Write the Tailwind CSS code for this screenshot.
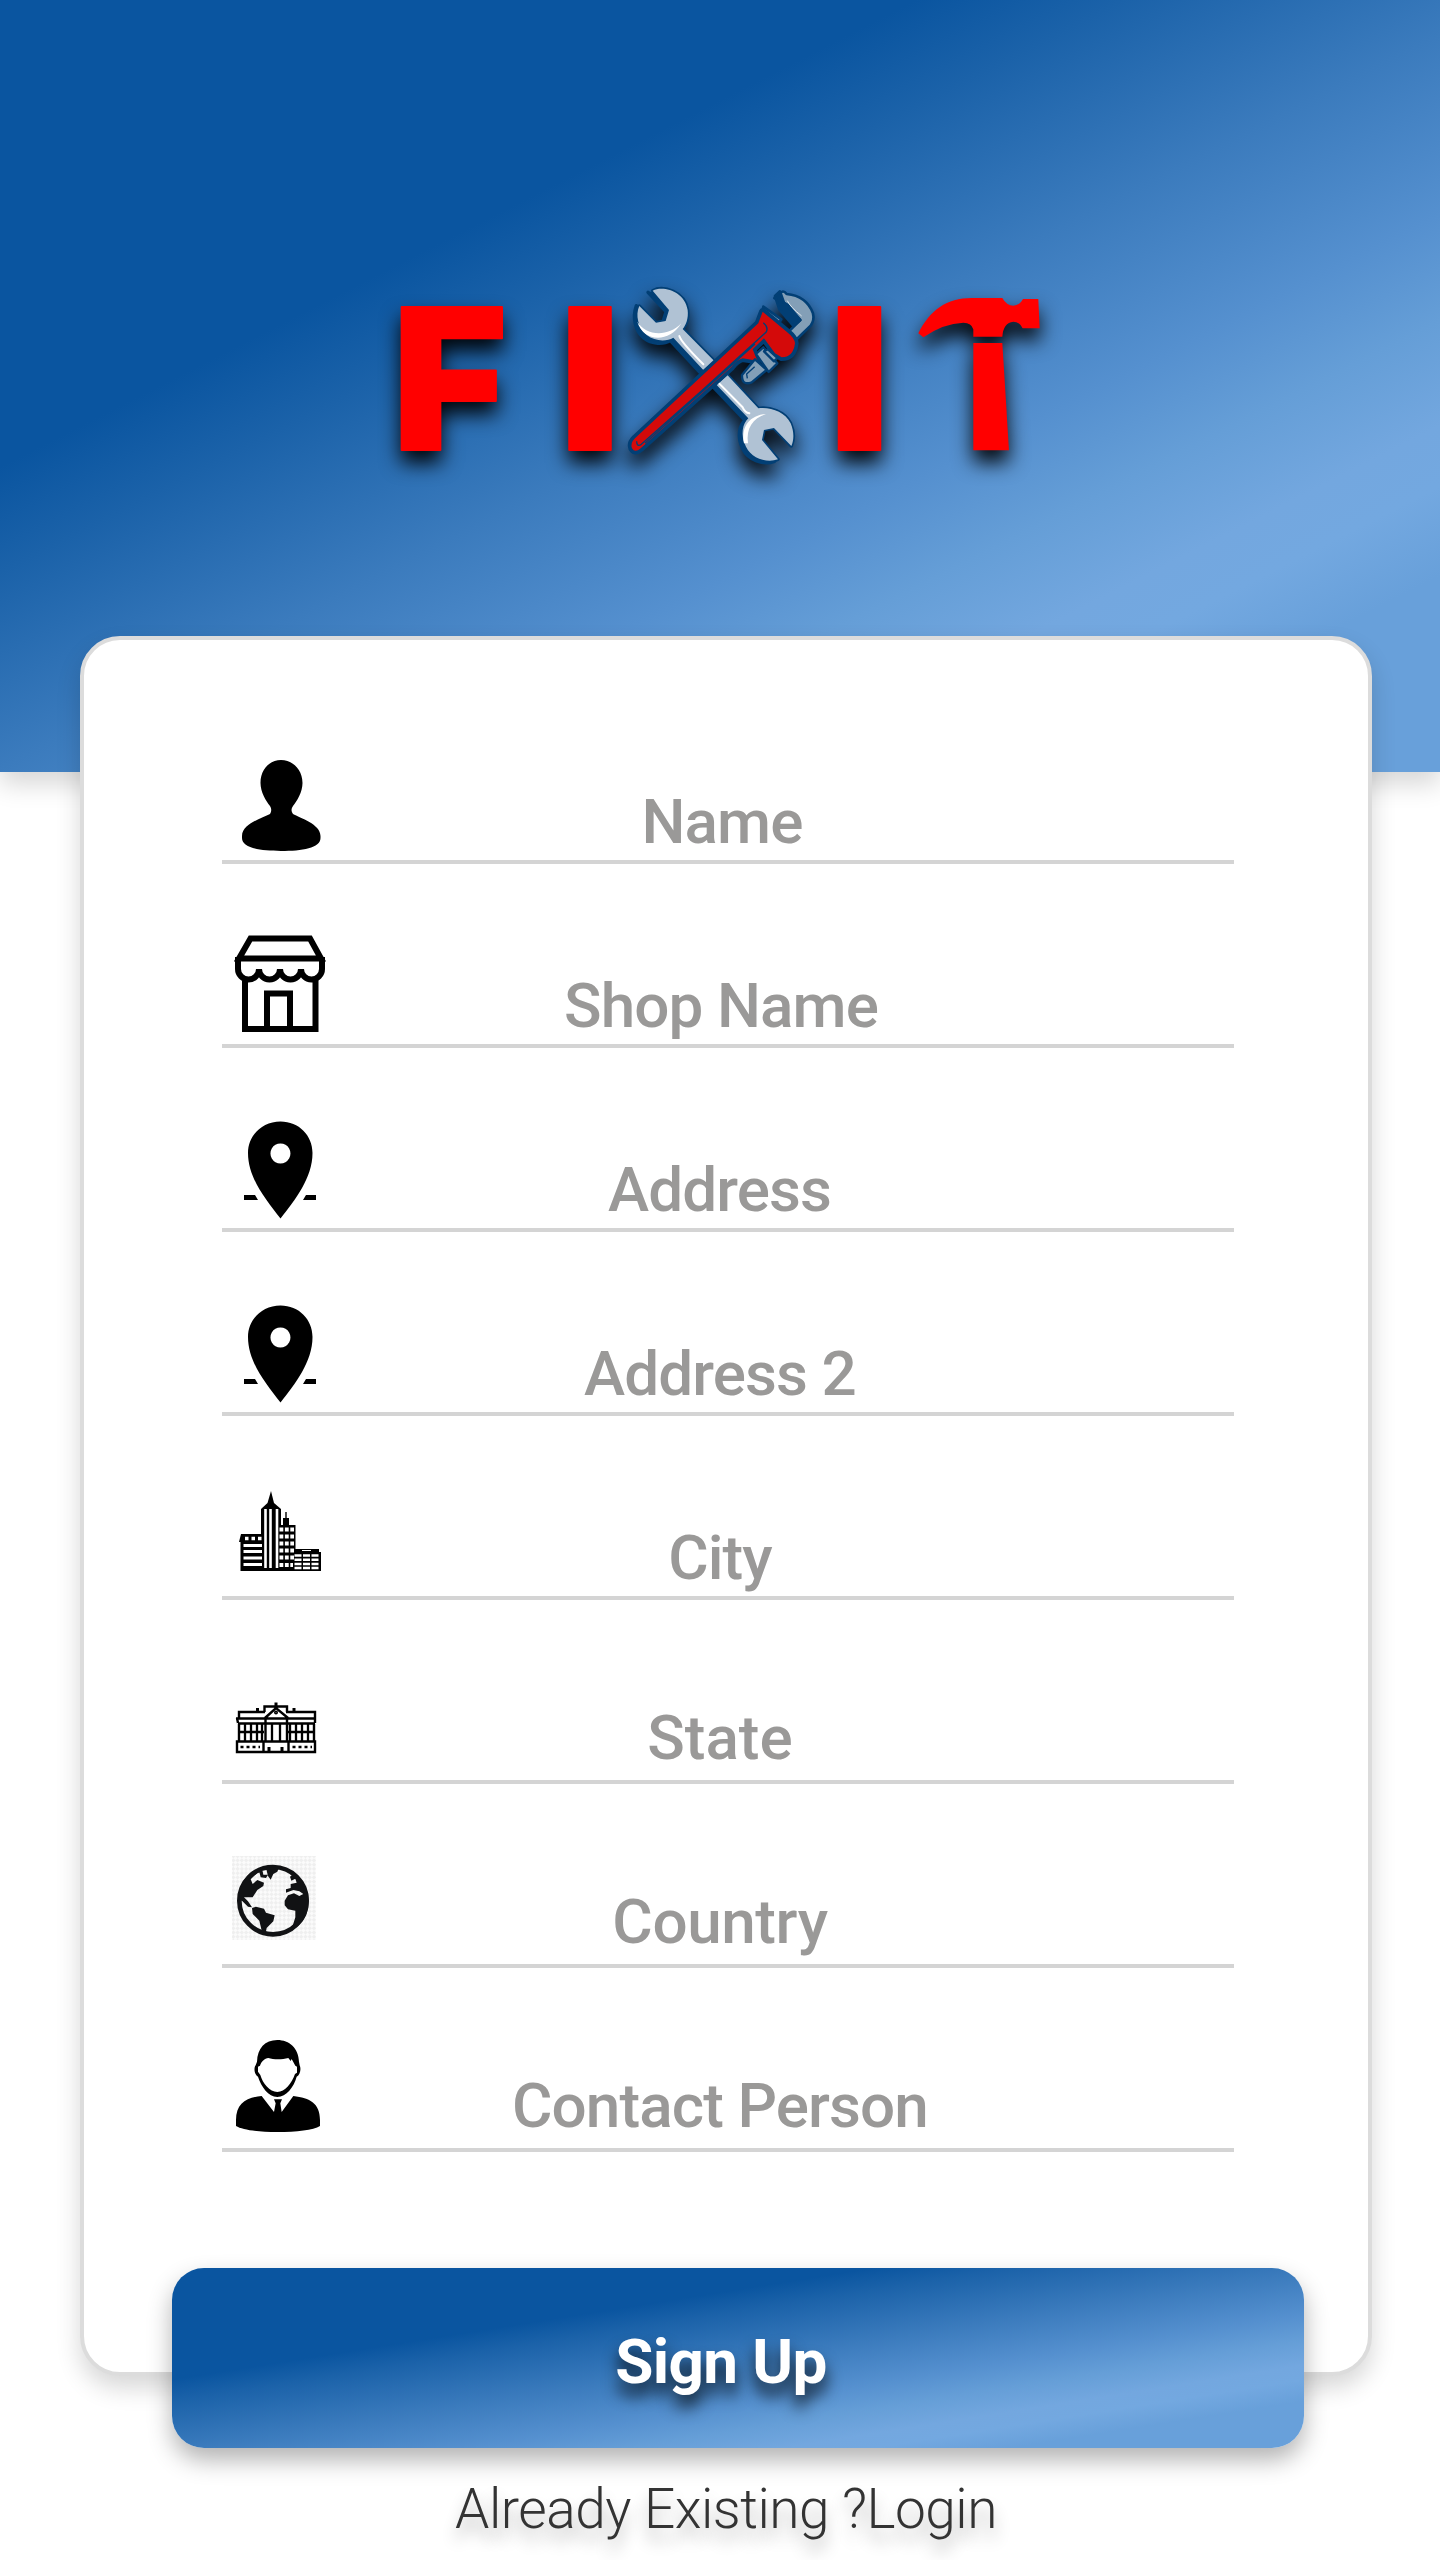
<!DOCTYPE html>
<html lang="en">
<head>
<meta charset="utf-8">
<title>FIXIT – Sign Up</title>
<script src="https://cdn.jsdelivr.net/npm/@tailwindcss/browser@4"></script>
</head>
<body class="bg-white font-[Roboto,'Open_Sans',sans-serif]">
<div class="relative h-[2560px] w-[1440px] overflow-hidden">
  <header class="flex h-[772px] justify-center bg-[linear-gradient(153deg,#0a55a0_0%,#0a55a0_31%,#1b62a9_38%,#3b7bbd_51%,#5590cf_63%,#659ed7_70%,#73a7df_77%,#73a8e0_81%,#68a0da_87%,#68a0da_100%)] pt-[260px] shadow-[0_12px_24px_rgba(0,0,0,0.16)]">
    <svg class="h-[240px] w-[700px] drop-shadow-[0_12px_10px_rgba(0,0,0,0.95)]" viewBox="370 260 700 240" role="img" aria-label="FIXIT">
      <g fill="#f00" stroke="#f00" stroke-width="2" stroke-linejoin="round" font-family="Inter, sans-serif" font-weight="900" font-size="196">
        <text x="392.500" y="450">F</text>
        <text transform="translate(559.500 450) scale(1.07 1)">I</text>
        <text transform="translate(829 450) scale(1.07 1)">I</text>
      </g>
      <g transform="translate(800 270) scale(.3333)" fill="#f00">
        <path d="M355 190C390 120 440 84 515 84H607Q620 107 640 107Q660 105 669 87H715L719 175H668Q660 155 640 155Q610 158 607 200H520V178Q515 158 490 158Q430 160 370 202Z"/>
        <path d="M520 219H607L627 541H520Z"/>
      </g>
      <g transform="translate(620 270) scale(.3333)" stroke-linejoin="round">
        <g fill="#023f75" stroke="#023f75" stroke-width="10">
          <path d="M98 62C130 45 195 65 203 120C206 145 198 165 188 177L282 272L250 300L160 203C140 215 105 215 80 195C55 175 45 135 58 108L108 158L137 153L147 120Z"/>
          <path transform="translate(-9 9)" d="M93 58L98 62C130 55 195 65 203 120L188 177L282 272L250 300L160 203C140 215 105 215 80 195C55 175 45 135 58 98L108 154L137 149L147 116Z"/>
          <path d="M322 315L415 415C450 410 495 425 512 460C525 490 520 515 514 528L462 474L432 480L426 510L474 568C440 580 395 565 378 530C360 495 368 460 385 445L290 345Z"/>
          <path transform="translate(-10 6)" d="M322 315L415 415L426 510L474 568C440 580 395 565 378 530C360 495 368 460 385 445L290 345Z"/>
        </g>
        <g fill="#b0c2d4">
          <path d="M98 62C130 45 195 65 203 120C206 145 198 165 188 177L282 272L250 300L160 203C140 215 105 215 80 195C55 175 45 135 58 108L108 158L137 153L147 120Z"/>
          <path d="M322 315L415 415C450 410 495 425 512 460C525 490 520 515 514 528L462 474L432 480L426 510L474 568C440 580 395 565 378 530C360 495 368 460 385 445L290 345Z"/>
        </g>
        <path fill="#fff" d="M52 155C75 195 140 205 184 160C145 222 70 215 52 155ZM372 520C362 470 390 435 438 432C398 445 378 475 384 520Z"/>
        <path fill="none" stroke="#fff" stroke-width="6" stroke-linecap="round" d="M178 198Q182 215 250 283M295 338L368 412Q375 428 388 430"/>
        <g fill="#839fb7" stroke="#023f75" stroke-width="8">
          <path d="M478 74Q488 56 500 72Q560 78 579 130Q584 150 572 167L530 208L506 185L541 150L504 105L463 84Z"/>
          <path fill="#023f75" d="M465 78L480 64L492 98L541 150L520 168L478 118Z"/>
          <path d="M430 110L484 148L474 164L426 132Z"/>
        </g>
        <path fill="none" stroke="#dbe4ec" stroke-width="3" d="M502 92Q510 110 545 138"/>
        <path fill="#d40a0a" stroke="#023f75" stroke-width="22" paint-order="stroke" d="M428 125L500 185Q525 205 525 220Q520 262 485 262L465 250L432 205L398 238L412 272L368 265Q350 270 335 290L62 535Q45 550 36 535Q30 520 45 505L415 160Z"/>
        <path fill="none" stroke="#023f75" stroke-width="4" d="M430 158Q447 172 438 187L245 362L64 523Q50 532 50 514M405 222L330 290L75 520"/>
        <g fill="#839fb7" stroke="#023f75" stroke-width="7">
          <path d="M405 268L440 300L395 337Q365 348 366 315Z"/>
          <path d="M408 252L430 232L472 280L446 306Z"/>
          <path d="M432 244L444 238L472 264L462 274Z"/>
        </g>
        <path fill="none" stroke="#023f75" stroke-width="4" d="M404 290L380 312L382 325"/>
      </g>
    </svg>
  </header>

  <main class="absolute left-[80px] top-[636px] h-[1740px] w-[1292px] rounded-[40px] border-4 border-[#dcdcdc] bg-white px-[138px] pt-10 shadow-[0_12px_24px_rgba(0,0,0,0.16)]">
    <ul class="w-[1012px] text-[62px] leading-[72px] font-medium tracking-[-0.9px] text-[#9a9998]">
      <li class="flex h-[184px] items-end border-b-4 border-[#d4d4d4]">
        <svg class="h-[180px] w-[120px] shrink-0" viewBox="222 680 120 180"><path d="M281 760C270 760 260.500 769 260.500 783C260.500 792 266 801 270 806Q272.500 810 270 814C262 818 242 824 242 836V838C242 848 260 851 281 851S320.500 848 320.500 838V836C320.500 824 300 818 293 814Q290 810 293 806C297 801 302.500 792 302.500 783C302.500 769 292 760 281 760Z"/></svg>
        <span class="flex-1 pb-0.5 pr-[132px] text-center">Name</span>
      </li>
      <li class="flex h-[184px] items-end border-b-4 border-[#d4d4d4]">
        <svg class="h-[180px] w-[120px] shrink-0" viewBox="222 864 120 180" fill="none" stroke="#000" stroke-width="6"><path d="M250.500 938.500H310L321 958.500H239ZM238 957V969A10.500 10.500 0 0 0 259 969A10.500 10.500 0 0 0 280 969A10.500 10.500 0 0 0 301 969A10.500 10.500 0 0 0 322 969V957M245 978V1029H315.500V978M267 1029V993.500H290V1029"/></svg>
        <span class="flex-1 pb-0.5 pr-[134px] text-center">Shop Name</span>
      </li>
      <li class="flex h-[184px] items-end border-b-4 border-[#d4d4d4]">
        <svg class="h-[180px] w-[120px] shrink-0" viewBox="222 1048 120 180"><g id="pin"><path fill-rule="evenodd" d="M280.500 1121.500C262 1121.500 248 1135.500 248 1153C248 1178 266 1200 280.500 1218.500C295 1200 312.500 1178 312.500 1153C312.500 1135.500 299 1121.500 280.500 1121.500ZM280.500 1143.500A10 10 0 1 1 280.400 1143.500Z"/><path d="M244 1195H255L258 1200H244ZM306 1195H316V1200H303Z"/></g></svg>
        <span class="flex-1 pb-0.5 pr-[137px] text-center">Address</span>
      </li>
      <li class="flex h-[184px] items-end border-b-4 border-[#d4d4d4]">
        <svg class="h-[180px] w-[120px] shrink-0" viewBox="222 1048 120 180"><use href="#pin"/></svg>
        <span class="flex-1 pb-0.5 pr-[136px] text-center">Address 2</span>
      </li>
      <li class="flex h-[184px] items-end border-b-4 border-[#d4d4d4]">
        <svg class="h-[180px] w-[120px] shrink-0" viewBox="222 1416 120 180">
          <path d="M271 1491L274 1503L281 1509V1571H261V1509L267.500 1503ZM241 1534H264L266 1541V1571H240.500V1542H239ZM277 1525H283V1518H285.300V1512H286.700V1518H289V1525H295.500V1552H321V1571H277ZM295 1549H319V1552H295Z"/>
          <path stroke="#fff" stroke-width="2.600" d="M265.500 1509V1568M270.500 1509V1568M277 1509V1568"/>
          <path stroke="#fff" stroke-width="3.500" stroke-dasharray="3.500 3" d="M245 1538.500H262"/>
          <path stroke="#fff" stroke-width="3" d="M243.500 1545.500H262M243.500 1551.500H262M243.500 1558H262M243.500 1564.500H262"/>
          <path stroke="#fff" stroke-width="4" stroke-dasharray="3.800 1.600" d="M279.500 1529.500H294M279.500 1536.500H294M279.500 1543.500H294M279.500 1550.500H294M279.500 1557.500H294M279.500 1565H293"/>
          <path stroke="#fff" stroke-width="2.600" stroke-dasharray="7 1.500" d="M294.500 1555.500H319M294.500 1559.800H319M294.500 1564H319M294.500 1568H319"/>
          <path stroke="#fff" d="M302 1550.500H311"/>
        </svg>
        <span class="flex-1 pb-0.5 pr-[136px] text-center">City</span>
      </li>
      <li class="flex h-[184px] items-end border-b-4 border-[#d4d4d4]">
        <svg class="h-[180px] w-[120px] shrink-0" viewBox="222 1600 120 180" fill="none" stroke="#000" stroke-width="2.400">
          <path d="M237 1741.500H315V1752H237ZM263.500 1741V1752M288.500 1741V1752M236 1718.500H316M238 1723.500H315M237 1718L238 1723M315 1718L315 1723M239 1718V1712H265M286 1712H315V1718M264.500 1712V1706.500H287V1712M265 1718L276 1708L288 1718"/>
          <path stroke-width="3" d="M276 1702.500V1708M257.500 1708V1711M294 1708V1711M269 1747V1752M282 1747V1752"/>
          <path d="M239 1724V1741M314 1724V1741M265.500 1719V1741M287 1719V1741"/>
          <path stroke-width="2.300" d="M245 1724V1741M251 1724V1741M257 1724V1741M262 1724V1741M290 1724V1741M296 1724V1741M302 1724V1741M308 1724V1741M272 1724V1741M280 1724V1741M238 1732H264M288 1732H315"/>
          <path stroke-dasharray="3 3" d="M240.500 1747H260M292.500 1747H312"/>
          <circle cx="276" cy="1712.500" r=".8"/>
        </svg>
        <span class="flex-1 pb-1.5 pr-[136px] text-center tracking-normal">State</span>
      </li>
      <li class="flex h-[184px] items-end border-b-4 border-[#d4d4d4]">
        <svg class="h-[180px] w-[120px] shrink-0" viewBox="222 1784 120 180">
          <defs><pattern id="check" width="6" height="6" patternUnits="userSpaceOnUse" patternTransform="rotate(45)"><path fill="#fbfbfb" d="M0 0h6v6H0z"/><path fill="#efefef" d="M0 0h3v3H0zM3 3h3v3H3z"/></pattern></defs>
          <path fill="url(#check)" d="M232 1856H316V1940H232Z"/>
          <g transform="translate(220 1840) scale(.3333)" fill="#111214">
            <circle cx="159" cy="182" r="101" fill="none" stroke="#111214" stroke-width="14"/>
            <path d="M58 182C54 130 85 95 120 85L128 96L112 98L92 118L98 132L112 120L132 128L130 138L112 150L98 172L90 172L72 172L84 184L96 202L84 200L66 182Z"/>
            <path d="M118 96L128 94L130 104L144 104L138 114L122 112ZM138 84L178 80L172 95L160 102L152 119L144 108Z"/>
            <path d="M96 204L108 200L132 206L138 218L164 226L160 244L140 264L136 284L126 276L118 242L98 222Z"/>
            <path d="M205 92C240 108 266 140 266 182C266 215 255 240 230 262L216 264L226 232L226 212L204 208L194 196V182L204 166L222 160L238 168L250 162L238 154L220 150L198 158V148L212 144L212 132L230 128L226 116L214 122L210 110L218 104Z"/>
          </g>
        </svg>
        <span class="flex-1 pb-1.5 pr-[136px] text-center tracking-[-0.4px]">Country</span>
      </li>
      <li class="flex h-[184px] items-end border-b-4 border-[#d4d4d4]">
        <svg class="h-[180px] w-[120px] shrink-0" viewBox="222 1968 120 180">
          <g transform="translate(220 2020) scale(.3333)">
            <path fill-rule="evenodd" d="M172 60C135 60 112 85 111 125L107 136C100 145 104 165 114 170C124 200 145 231 172 231S222 200 230 170C241 165 244 145 239 136L237 125C236 85 208 60 172 60ZM145 114C160 119 185 120 205 114L212 123L215 117L226 137L231 140V158L225 162C215 190 195 216 172 216S128 190 121 165L114 155V140L120 137C124 125 134 115 145 114Z"/>
            <path d="M125 228L162 276L167 250L162 238H186L181 250L185 276L220 228C270 234 300 250 300 300V318C280 330 230 336 172 336S68 330 48 318V300C48 250 80 232 125 228Z"/>
          </g>
        </svg>
        <span class="flex-1 pb-1.5 pr-[136px] text-center">Contact Person</span>
      </li>
    </ul>
  </main>

  <button class="absolute left-[172px] top-[2268px] h-[180px] w-[1132px] rounded-[32px] bg-[linear-gradient(to_bottom_right,#0a55a0_0%,#0a55a0_31%,#1b62a9_37%,#3b7bbd_51%,#5590cf_63%,#659ed7_70%,#73a7df_77%,#73a8e0_81%,#68a0da_87%,#68a0da_100%)] pt-1.5 pr-[34px] text-[62px] font-bold tracking-[-0.6px] text-white shadow-[0_12px_24px_rgba(0,0,0,0.3)] [text-shadow:0_12px_16px_rgba(0,0,0,0.85)]">Sign Up</button>
  <p class="absolute left-0 top-[2476px] w-[1452px] text-center text-[55px] leading-[66px] font-light tracking-[-0.5px] text-[#333] [text-shadow:0_12px_16px_rgba(0,0,0,0.3)]">Already Existing ?<a>Login</a></p>
</div>
</body>
</html>
